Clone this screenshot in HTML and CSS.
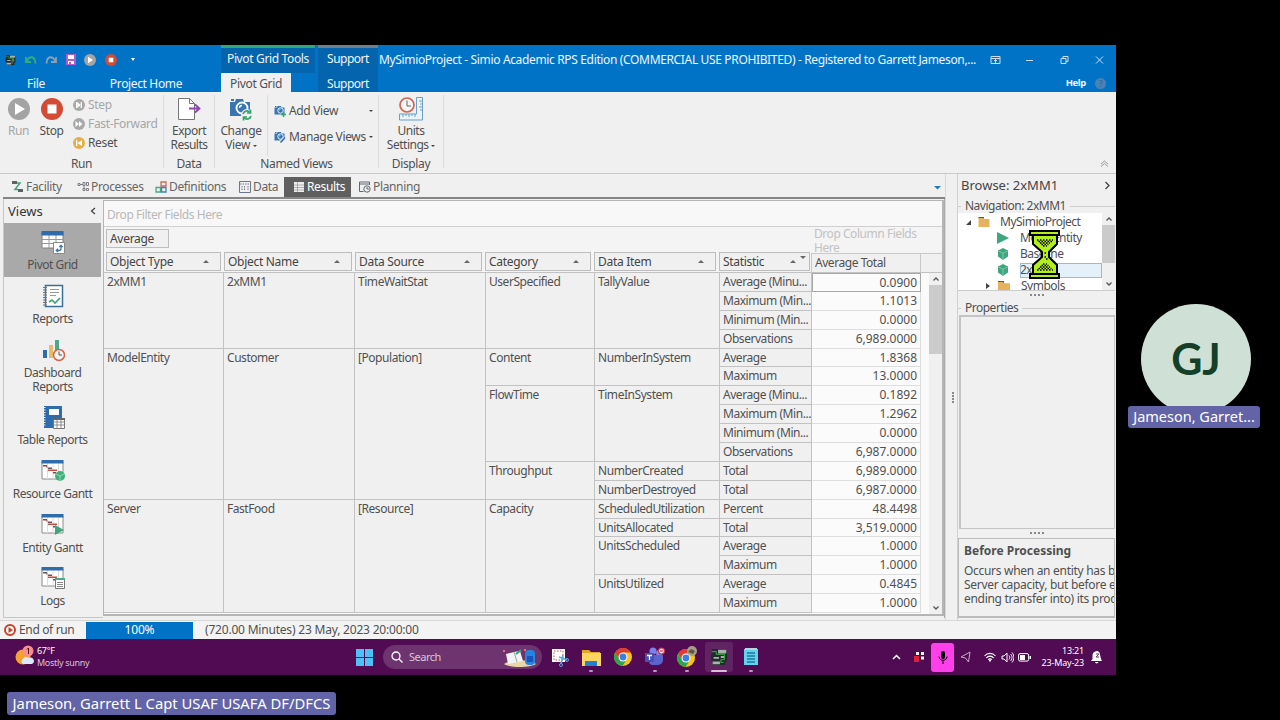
FILE: index.html
```
<!DOCTYPE html>
<html lang="en">
<head>
    <meta charset="UTF-8">
    <meta name="viewport" content="width=device-width, initial-scale=1.0">
    <title>MySimioProject - Simio</title>
    <link rel="stylesheet" href="styles.css">
</head>
<body>
    <!-- shared icon shapes -->
    <svg class="defs" width="0" height="0">
        <symbol id="gantt" viewBox="0 0 24 24">
            <path fill="#fff" stroke="#8a8a8a" d="M1 3h21v17H1z"/>
            <path stroke="#ddd" d="M6.500 4v16M12 4v16M17.500 4v16"/>
            <path fill="#2f6cab" d="M.5 1h22v3.500H.5z"/>
            <path fill="#5a5a62" d="M2 6h4v1.500H2zM7 8.500h4V10H7zM12 13h3v1.500h-3z"/>
            <path fill="#cf4c3c" d="M5 7.200h1.500v1.300H5zM7 10.500h9V12H7z"/>
        </symbol>
        <symbol id="camera" viewBox="0 0 24 24">
            <path fill="#3975b3" d="M1 5h5l1-3h7l1 3h6v14H1z"/>
            <path fill="#3975b3" d="M2 2h3v2H2z"/>
            <circle cx="13" cy="11" r="5.500" fill="#3975b3" stroke="#fff" stroke-width="1.800"/>
            <path fill="none" stroke="#fff" stroke-width="1.300" d="M10.500 11a2.500 2.500 0 0 1 2.500-2.500"/>
        </symbol>
        <symbol id="cube" viewBox="0 0 12 12">
            <path fill="#3fa67f" d="M6 0l5 2.600v6L6 12 1 8.600v-6z"/>
            <path fill="none" stroke="#8fd0b7" stroke-width=".8" d="M1.500 3L6 5.400 10.500 3M6 5.400v6"/>
        </symbol>
        <symbol id="folder" viewBox="0 0 12 11">
            <path fill="#555" d="M0 0h6v2H0z"/>
            <path fill="#e6b25c" d="M0 1h5l1 1.200h6V11H0z"/>
        </symbol>
        <symbol id="chrome" viewBox="0 0 20 20">
            <circle cx="10" cy="10" r="9" fill="#fbc116"/>
            <path fill="#e33b2e" d="M2.200 5.500A9 9 0 0 1 17.800 5.500H10L6 12.300z"/>
            <path fill="#31a350" d="M2.200 5.500A9 9 0 0 0 9.500 19l4.300-6.800L10 14l-4-2z"/>
            <circle cx="10" cy="10" r="4.500" fill="#fff"/>
            <circle cx="10" cy="10" r="3.400" fill="#3d7de6"/>
        </symbol>
        <symbol id="simio" viewBox="0 0 20 20">
            <path fill="#242b2c" d="M2 1h16v4h1v10h-2v4H3v-5H1V7h1z"/>
            <path fill="#aab2ae" d="M9 2h9v4H9zM4 10h6v2H4zM3 15h8v3H3zM12 9h4v2h-4z"/>
            <path fill="none" stroke="#35b04a" stroke-width="1.100" d="M2 4h5v3h9v6h-4v3h3"/>
        </symbol>
    </svg>

    <div class="app">
        <header class="titlebar">
            <div class="title-left">
                <div class="quick">
                    <svg width="11" height="12" viewBox="0 0 20 20"><use href="#simio"/></svg>
                    <svg width="12" height="10" viewBox="0 0 12 10"><path d="M1 2v5h5M1.500 6.500C4 1 10 0 10.500 8.500" fill="none" stroke="#35ae72" stroke-width="1.800"/></svg>
                    <svg width="12" height="10" viewBox="0 0 12 10"><path d="M11 2v5H6M10.500 6.500C8 1 2 0 1.500 8.500" fill="none" stroke="#8c9fb3" stroke-width="1.800"/></svg>
                    <svg width="10" height="11" viewBox="0 0 10 11"><path fill="#b25bd0" d="M0 0h10v11H0z"/><path fill="#fff" d="M2 1h6v4H2zM2 7h6v3H2z"/><path fill="#b25bd0" d="M3 8h2v2H3z"/></svg>
                    <svg width="12" height="12" viewBox="0 0 12 12"><circle cx="6" cy="6" r="6" fill="#a5a5a5"/><path fill="#fff" d="M4 2.800v6.400L9 6z"/></svg>
                    <svg width="12" height="12" viewBox="0 0 12 12"><circle cx="6" cy="6" r="6" fill="#d24b34"/><path fill="#fff" d="M3.700 3.700h4.600v4.600H3.700z"/></svg>
                    <svg width="6" height="5" viewBox="0 0 6 5"><path fill="#fff" d="M1 1h4L3 4z"/></svg>
                </div>
                <div class="menu"><span class="file">File</span><span class="home">Project Home</span></div>
            </div>
            <div class="ctx ctx-pivot">
                <div class="ctx-title">Pivot Grid Tools</div>
                <div class="ctx-tab active">Pivot Grid</div>
            </div>
            <div class="ctx ctx-support">
                <div class="ctx-title">Support</div>
                <div class="ctx-tab">Support</div>
            </div>
            <div class="title-right">
                <div class="caption-row">
                    <span class="caption">MySimioProject - Simio Academic RPS Edition (COMMERCIAL USE PROHIBITED) - Registered to Garrett Jameson,...</span>
                    <svg class="window-buttons" width="112" height="12" viewBox="0 0 112 12" fill="none" stroke="#c9dff1">
                        <path d="M1 2.500h9v7H1zM1 4.500h9M5.500 9V5.500M4 7l1.500-1.500L7 7"/>
                        <path d="M36 6.500h7"/>
                        <path d="M71 4.500h5v5h-5zM73 4.500v-2h5v5h-2"/>
                        <path d="M106 2.500l7 7M113 2.500l-7 7"/>
                    </svg>
                </div>
                <div class="help-row"><b>Help</b><span class="help-mark">?</span></div>
            </div>
        </header>

        <section class="ribbon">
            <div class="group group-run">
                <div class="group-body">
                    <div class="big off">
                        <svg width="24" height="24" viewBox="0 0 24 24"><circle cx="12" cy="12" r="11" fill="#a3a3a3"/><path fill="#fff" d="M8 6v12l10-6z"/></svg>
                        <span>Run</span>
                    </div>
                    <div class="big">
                        <svg width="24" height="24" viewBox="0 0 24 24"><circle cx="12" cy="12" r="11" fill="#d24b34"/><path fill="#fff" d="M7.500 7.500h9v9h-9z"/></svg>
                        <span>Stop</span>
                    </div>
                    <div class="small-list">
                        <div class="small off"><svg width="12" height="12" viewBox="0 0 12 12"><circle cx="6" cy="6" r="6" fill="#a8a8a8"/><path fill="#fff" d="M3 3h1.300v6H3zM4.500 3l3 3-3 3zM7.600 3H9v6H7.600z"/></svg>Step</div>
                        <div class="small off"><svg width="12" height="12" viewBox="0 0 12 12"><circle cx="6" cy="6" r="6" fill="#a8a8a8"/><path fill="#fff" d="M2.500 3l3.500 3-3.500 3zM6 3l3.500 3L6 9z"/></svg>Fast-Forward</div>
                        <div class="small"><svg width="12" height="12" viewBox="0 0 12 12"><circle cx="6" cy="6" r="6" fill="#e8ad45"/><path fill="#fff" d="M3 3h1.300v6H3zM9 3v6L4.500 6z"/></svg>Reset</div>
                    </div>
                </div>
                <div class="group-name">Run</div>
            </div>
            <div class="group group-data">
                <div class="group-body">
                    <div class="big">
                        <svg width="24" height="24" viewBox="0 0 24 24"><path fill="#fff" stroke="#777" d="M1.500 1.500h11l5 5v16h-16z"/><path fill="none" stroke="#777" d="M12.500 1.500v5h5"/><path fill="none" stroke="#8d46ae" stroke-width="1.800" d="M12 11.500h10M18 7.500l4.500 4-4.500 4"/></svg>
                        <span>Export<br>Results</span>
                    </div>
                </div>
                <div class="group-name">Data</div>
            </div>
            <div class="group group-views">
                <div class="group-body">
                    <div class="big">
                        <svg width="24" height="24" viewBox="0 0 24 24"><use href="#camera"/><circle cx="18" cy="18" r="6" fill="#f0f0f0"/><path fill="none" stroke="#35a56d" stroke-width="1.700" d="M14 17a4 4 0 0 1 7-1.500M22 19a4 4 0 0 1-7 1.500M21.500 12.500v3.500H18M14.500 23.500V20H18"/></svg>
                        <span>Change<br>View <i class="drop"></i></span>
                    </div>
                    <div class="view-list">
                        <div class="small"><svg width="12" height="12" viewBox="0 0 24 24"><use href="#camera"/><path stroke="#35a56d" stroke-width="3" d="M19 14v10M14 19h10"/></svg>Add View<i class="drop far"></i></div>
                        <div class="small"><svg width="12" height="12" viewBox="0 0 24 24"><use href="#camera"/><path stroke="#f0f0f0" stroke-width="6" d="M12 23l9-9"/><path stroke="#34689d" stroke-width="3" d="M13 23l9-10"/></svg>Manage Views<i class="drop far"></i></div>
                    </div>
                </div>
                <div class="group-name">Named Views</div>
            </div>
            <div class="group group-display">
                <div class="group-body">
                    <div class="big">
                        <svg width="26" height="24" viewBox="0 0 26 24"><path fill="#e9f4fa" stroke="#6b9fc6" d="M18.500.5h6v22.500h-23v-6h17z"/><path stroke="#6b9fc6" d="M24 4h-3M24 7h-2M24 10h-3M24 13h-2M5 17v3M8 17v2M11 17v3M14 17v2M17 17v3"/><circle cx="9" cy="8" r="7" fill="#f6f6f6" stroke="#cf6752" stroke-width="1.700"/><path fill="none" stroke="#666" d="M9 3.500V9h4"/></svg>
                        <span>Units<br>Settings <i class="drop"></i></span>
                    </div>
                </div>
                <div class="group-name">Display</div>
            </div>
            <svg class="collapse" width="9" height="7" viewBox="0 0 9 7" fill="none" stroke="#999"><path d="M1 4l3.500-3L8 4M1 6.500l3.500-3 3.500 3"/></svg>
        </section>

        <div class="workspace">
            <main class="main">
                <nav class="tabs">
                    <span class="tab facility"><svg width="13" height="12" viewBox="0 0 13 12"><path fill="#5a6461" d="M1 0h5v3H1zM7 8h5v3H7z"/><path fill="none" stroke="#48a283" stroke-width="1.500" d="M6 2h3L4 8.500h3"/></svg>Facility</span>
                    <span class="tab processes"><svg width="12" height="12" viewBox="0 0 12 12" fill="none" stroke="#7d7d85"><path d="M1 2.500h2v2H1zM3 3.500h3M6 1.500h2v3H6zM9.500 1.500h2v3h-2zM7 5v3M6 7.500h2v2H6zM9.500 7.500h2v2h-2z"/></svg>Processes</span>
                    <span class="tab definitions"><svg width="12" height="12" viewBox="0 0 12 12" fill="none" stroke-width="1.300"><path stroke="#d06855" d="M6 1h5v4H6z"/><path stroke="#4ba78d" d="M1 6.500h4.500v4.500H1z"/><path stroke="#4380b5" d="M6.500 6.500H11V11H6.500z"/></svg>Definitions</span>
                    <span class="tab data"><svg width="12" height="12" viewBox="0 0 12 12" fill="none" stroke="#6c7883"><path d="M.5.5h11v11H.5z"/><path stroke-dasharray="1.500 1" d="M1 3h10M3 5v5M5.500 5v5M9 5v5"/></svg>Data</span>
                    <span class="tab results"><svg width="10" height="10" viewBox="0 0 10 10"><path fill="#eee" d="M0 0h10v10H0z"/><path stroke="#888" stroke-width=".6" d="M3.500 0v10M0 3h10M0 5.500h10M0 8h10"/></svg>Results</span>
                    <span class="tab planning"><svg width="12" height="12" viewBox="0 0 12 12" fill="none" stroke="#5d6972"><path d="M.5 1h10v3M.5 1v9.500h4M.5 3h10"/><circle cx="8" cy="8" r="3.200"/><path d="M8 6v2h2"/></svg>Planning</span>
                    <svg class="tab-menu" width="7" height="5" viewBox="0 0 7 5"><path fill="#2a78b8" d="M0 1h7L3.500 4.500z"/></svg>
                </nav>
                <div class="results-page">
                    <aside class="views">
                        <div class="views-head">Views<svg width="6" height="8" viewBox="0 0 6 8"><path fill="none" stroke="#444" stroke-width="1.300" d="M5 1L1.500 4 5 7"/></svg></div>
                        <div class="view selected">
                            <svg width="24" height="24" viewBox="0 0 24 24"><path fill="#fff" stroke="#808080" d="M1 2h21v16H1z"/><path stroke="#999" d="M1 9.500h21M1 13.500h21M8 5v13M15 5v13"/><path fill="#2f6cab" d="M.5 1h22v4.500H.5z"/><path fill="#fff" stroke="#888" d="M12.500 12.500h11v11h-11z"/><path fill="none" stroke="#3975b3" stroke-width="1.300" d="M15.500 20.500h2.500c1.500 0 2-1 2-2v-3M17 18.800l-1.700 1.700L17 22M18.300 17L20 15.300l1.700 1.700"/></svg>
                            <span>Pivot Grid</span>
                        </div>
                        <div class="view">
                            <svg width="24" height="24" viewBox="0 0 24 24"><path fill="#fff" stroke="#3c6f98" stroke-width="1.500" d="M4.500 1.500h17v21h-17z"/><path stroke="#777" stroke-width="4" stroke-dasharray="1 1.500" d="M4 3v19"/><path stroke="#999" d="M9 5.500h9M9 8.500h9M9 11.500h6"/><path fill="none" stroke="#3ca574" stroke-width="1.700" d="M8 18l3-2 3 3 5-5"/></svg>
                            <span>Reports</span>
                        </div>
                        <div class="view tall">
                            <svg width="24" height="24" viewBox="0 0 24 24"><path fill="#2f6cab" d="M2 12h4v8H2z"/><path fill="#e9bb69" d="M8 7h4v13H8z"/><path fill="#4ba78d" d="M14 2h4v16h-4z"/><circle cx="18" cy="17" r="5.500" fill="#f3f3f3" stroke="#d36347" stroke-width="1.500"/><path fill="none" stroke="#555" d="M18 13.500V17h3"/></svg>
                            <span>Dashboard<br>Reports</span>
                        </div>
                        <div class="view">
                            <svg width="24" height="24" viewBox="0 0 24 24"><path fill="#2f6cab" d="M3 1h18v22H3z"/><path stroke="#f0f0f0" stroke-width="3" stroke-dasharray="1 1.500" d="M3 2v20"/><path fill="#fff" d="M8 4h10v6H8z"/><path fill="#fff" stroke="#777" d="M12.500 13.500h11v10h-11z"/><path stroke="#777" stroke-width=".8" d="M12 17h12M12 20h12M16 14v9M20 14v9"/><path fill="#666" d="M12 13h12v2H12z"/></svg>
                            <span>Table Reports</span>
                        </div>
                        <div class="view">
                            <svg width="24" height="24" viewBox="0 0 24 24"><use href="#gantt"/><circle cx="19" cy="17" r="5" fill="#41b07a"/><path fill="none" stroke="#a9dfc5" stroke-width=".8" d="M15 15l4 2 4-2M19 17v5"/></svg>
                            <span>Resource Gantt</span>
                        </div>
                        <div class="view">
                            <svg width="24" height="24" viewBox="0 0 24 24"><use href="#gantt"/><path fill="#3fa67f" d="M14 12v10l9-5z"/></svg>
                            <span>Entity Gantt</span>
                        </div>
                        <div class="view">
                            <svg width="24" height="24" viewBox="0 0 24 24"><use href="#gantt"/><path fill="#fff" stroke="#777" d="M14.500 12.500h9v10h-9z"/><path fill="#4ba78d" d="M14 12h10v2H14z"/><path stroke="#888" d="M16 16.500h6M16 18.500h6M16 20.500h6"/></svg>
                            <span>Logs</span>
                        </div>
                    </aside>

                    <div class="pivot">
                        <div class="filter-drop">Drop Filter Fields Here</div>
                        <div class="pivot-top">
                            <div class="row-fields">
                                <div class="field average">Average</div>
                                <div class="fields">
                                    <div class="field">Object Type<i class="up"></i></div>
                                    <div class="field">Object Name<i class="up"></i></div>
                                    <div class="field">Data Source<i class="up"></i></div>
                                    <div class="field">Category<i class="up"></i></div>
                                    <div class="field">Data Item<i class="up"></i></div>
                                    <div class="field statistic">Statistic<i class="up"></i><i class="funnel"></i></div>
                                </div>
                            </div>
                            <div class="column-fields">
                                <div class="column-drop">Drop Column Fields Here</div>
                                <div class="total-head"><span>Average Total</span></div>
                            </div>
                        </div>
                        <div class="pivot-body">
                            <div class="cells">
                                <div class="r4">2xMM1</div><div class="r4">2xMM1</div><div class="r4">TimeWaitStat</div><div class="r4">UserSpecified</div><div class="r4">TallyValue</div>
                                <div>Average (Minu...</div><div class="num focus">0.0900</div>
                                <div>Maximum (Min...</div><div class="num">1.1013</div>
                                <div>Minimum (Min...</div><div class="num">0.0000</div>
                                <div>Observations</div><div class="num">6,989.0000</div>

                                <div class="r8">ModelEntity</div><div class="r8">Customer</div><div class="r8">[Population]</div><div class="r2">Content</div><div class="r2">NumberInSystem</div>
                                <div>Average</div><div class="num">1.8368</div>
                                <div>Maximum</div><div class="num">13.0000</div>
                                <div class="r4">FlowTime</div><div class="r4">TimeInSystem</div>
                                <div>Average (Minu...</div><div class="num">0.1892</div>
                                <div>Maximum (Min...</div><div class="num">1.2962</div>
                                <div>Minimum (Min...</div><div class="num">0.0000</div>
                                <div>Observations</div><div class="num">6,987.0000</div>
                                <div class="r2">Throughput</div><div>NumberCreated</div><div>Total</div><div class="num">6,989.0000</div>
                                <div>NumberDestroyed</div><div>Total</div><div class="num">6,987.0000</div>

                                <div class="r6">Server</div><div class="r6">FastFood</div><div class="r6">[Resource]</div><div class="r6">Capacity</div>
                                <div>ScheduledUtilization</div><div>Percent</div><div class="num">48.4498</div>
                                <div>UnitsAllocated</div><div>Total</div><div class="num">3,519.0000</div>
                                <div class="r2">UnitsScheduled</div><div>Average</div><div class="num">1.0000</div>
                                <div>Maximum</div><div class="num">1.0000</div>
                                <div class="r2">UnitsUtilized</div><div>Average</div><div class="num">0.4845</div>
                                <div>Maximum</div><div class="num">1.0000</div>
                            </div>
                            <div class="scroll">
                                <svg width="8" height="6" viewBox="0 0 8 6"><path fill="none" stroke="#555" stroke-width="1.300" d="M1.500 4.500L4 2l2.500 2.500"/></svg>
                                <div class="thumb"></div>
                                <svg width="8" height="6" viewBox="0 0 8 6"><path fill="none" stroke="#555" stroke-width="1.300" d="M1.500 1.500L4 4l2.500-2.500"/></svg>
                            </div>
                        </div>
                    </div>
                </div>
            </main>

            <div class="splitter"><i></i><i></i><i></i><i></i></div>

            <aside class="browse">
                <div class="browse-head">Browse: 2xMM1<svg width="7" height="9" viewBox="0 0 7 9"><path fill="none" stroke="#444" stroke-width="1.300" d="M1.500 1L5 4.500 1.500 8"/></svg></div>
                <div class="legend">Navigation: 2xMM1</div>
                <div class="nav-box">
                    <div class="tree">
                        <div class="node root"><svg class="arrow" width="5" height="5" viewBox="0 0 5 5"><path fill="#444" d="M5 0v5H0z"/></svg><svg width="12" height="10"><use href="#folder"/></svg><span>MySimioProject</span></div>
                        <div class="node"><svg width="12" height="12" viewBox="0 0 12 12"><path fill="#3fa67f" d="M0 0v12l12-6z"/></svg><span>ModelEntity</span></div>
                        <div class="node"><svg width="12" height="12"><use href="#cube"/></svg><span>Baseline</span></div>
                        <div class="node current"><svg width="12" height="12"><use href="#cube"/></svg><span>2xMM1</span></div>
                        <div class="node closed"><svg class="arrow" width="4" height="6" viewBox="0 0 4 6"><path fill="#444" d="M0 0l4 3-4 3z"/></svg><svg width="12" height="11"><use href="#folder"/></svg><span>Symbols</span></div>
                    </div>
                    <div class="scroll nav-scroll">
                        <svg width="8" height="6" viewBox="0 0 8 6"><path fill="none" stroke="#555" stroke-width="1.300" d="M1.500 4.500L4 2l2.500 2.500"/></svg>
                        <div class="thumb"></div>
                        <svg width="8" height="6" viewBox="0 0 8 6"><path fill="none" stroke="#555" stroke-width="1.300" d="M1.500 1.500L4 4l2.500-2.500"/></svg>
                    </div>
                </div>
                <div class="grip"></div>
                <div class="legend props">Properties</div>
                <div class="props-box"></div>
                <div class="grip"></div>
                <div class="hint">
                    <b>Before Processing</b>
                    <p>Occurs when an entity has been<br>Server capacity, but before ent<br>ending transfer into) its proces</p>
                </div>
            </aside>
        </div>

        <footer class="status">
            <div class="state"><svg width="12" height="12" viewBox="0 0 12 12"><circle cx="6" cy="6" r="5" fill="#fff" stroke="#c8402b" stroke-width="2"/><path fill="#c8402b" d="M4.500 3v6L9 6z"/></svg>End of run</div>
            <div class="progress">100%</div>
            <div class="clock">(720.00 Minutes) 23 May, 2023 20:00:00</div>
        </footer>

        <div class="taskbar">
            <div class="weather">
                <svg width="19" height="20" viewBox="0 0 19 20"><circle cx="8" cy="12" r="7.500" fill="#f3a32f"/><path fill="#dce9fa" d="M8 19a3 3 0 0 1 0-5 4 4 0 0 1 6-1 3 3 0 0 1 3 6z"/><circle cx="13" cy="6" r="5.500" fill="#f58e8c"/><path stroke="#4c1320" d="M13.500 3v6M12 4.500L13.500 3"/></svg>
                <div>67°F<br><span>Mostly sunny</span></div>
            </div>
            <svg class="win" width="17" height="17" viewBox="0 0 17 17"><path fill="#4fc0f5" d="M0 0h8v8H0zM9 0h8v8H9zM0 9h8v8H0zM9 9h8v8H9z"/></svg>
            <div class="search">
                <svg width="12" height="12" viewBox="0 0 12 12"><circle cx="5" cy="5" r="4" fill="none" stroke="#fff" stroke-width="1.300"/><path stroke="#fff" stroke-width="1.300" d="M8 8l3.500 3.500"/></svg>
                <span>Search</span>
                <svg width="36" height="19" viewBox="0 0 36 19"><path fill="#ead5a6" d="M2 16c8-5 24-5 32 0-6 4-26 4-32 0z"/><path fill="#f2f3f5" d="M4 6l8-2 6-1 3 10-10 2-5 1z"/><path stroke="#91a79f" d="M12 4l3 10"/><path stroke="#38a078" stroke-width="2" d="M14 6l5-4"/><rect x="23" y="2" width="10" height="15" rx="4" fill="#2584e0"/><path fill="#1a53b6" d="M25 8h6v6h-6z"/><path fill="#f06c8a" d="M1 2h2v2H1zM22 1h2v2h-2z"/></svg>
            </div>
            <div class="task"><svg width="19" height="19" viewBox="0 0 19 19"><path fill="#fff" d="M2 1h13v13H2z"/><path fill="none" stroke="#d45341" stroke-dasharray="1.500 1.500" d="M4 3h9v9H4z"/><path fill="none" stroke="#58a9dc" stroke-width="1.700" d="M11 16l2-9M9 9l8 3"/><circle cx="11" cy="17" r="1.500" fill="none" stroke="#58a9dc"/><circle cx="17" cy="12" r="1.500" fill="none" stroke="#58a9dc"/></svg></div>
            <div class="task open"><svg width="19" height="19" viewBox="0 0 19 19"><path fill="#e1a52a" d="M0 2h7l2 2h9v4H0z"/><path fill="#fcd462" d="M0 5h19v13H0z"/><path fill="#2481cf" d="M3 13h12v5H3z"/></svg></div>
            <div class="task"><svg width="20" height="20"><use href="#chrome"/></svg></div>
            <div class="task open"><svg width="20" height="20" viewBox="0 0 20 20"><circle cx="14" cy="6" r="3" fill="#7b83eb"/><circle cx="8" cy="4" r="3.500" fill="#7b83eb"/><path fill="#5b63cc" d="M4 8h14v5a5 5 0 0 1-5 5H8a4 4 0 0 1-4-4z"/><path fill="#4651b8" d="M0 6h9v9H0z"/><path stroke="#fff" stroke-width="1.300" d="M2 8.500h5M4.500 8.500V13"/><circle cx="16.500" cy="4" r="3" fill="#eee" stroke="#d22f4a" stroke-width="1.200"/><path stroke="#d22f4a" stroke-width="1.200" d="M15 4h3"/></svg></div>
            <div class="task open"><svg width="22" height="22" viewBox="0 0 22 22"><use href="#chrome" y="2" width="20" height="20"/><circle cx="16" cy="5" r="5" fill="#a69d87"/><path fill="#55593e" d="M12 6l3-3 4 2-2 3z"/></svg></div>
            <div class="task open current-task"><svg width="18" height="18"><use href="#simio"/></svg></div>
            <div class="task open"><svg width="16" height="18" viewBox="0 0 16 18"><path fill="#66d1ec" d="M1 1h14v16H1z"/><path stroke="#1a7b9c" stroke-width="1.300" d="M4 5h8M4 8h8M4 11h8M4 14h8"/><path fill="#b9d4db" d="M2 0h12v2H2z"/></svg></div>
            <div class="tray">
                <svg width="9" height="6" viewBox="0 0 9 6"><path fill="none" stroke="#fff" stroke-width="1.500" d="M1 5l3.500-3.500L8 5"/></svg>
                <svg class="dots" width="12" height="12" viewBox="0 0 12 12"><path fill="#fff" d="M3 1h3v3H3zM8 1h3v3H8zM8 5.500h3v3H8z"/><path fill="#df2034" d="M1 5h5v6H1z"/></svg>
                <div class="mic"><svg width="10" height="13" viewBox="0 0 10 13"><rect x="3" y="0" width="4" height="8" rx="2"/><path fill="none" stroke="#000" d="M1 5.500c0 5 8 5 8 0M5 9.500V13"/></svg></div>
                <svg class="loc" width="11" height="12" viewBox="0 0 11 12"><path fill="none" stroke="#c8acc9" d="M10 1L8.500 11 5.500 7 1 6z"/></svg>
                <svg class="wifi" width="12" height="10" viewBox="0 0 12 10" fill="none" stroke="#fff" stroke-width="1.100"><path d="M.5 4c3-3.500 8-3.500 11 0M2.300 6c2-2.500 5.400-2.500 7.400 0M4.200 7.700c1-1.200 2.600-1.200 3.600 0"/><circle cx="6" cy="8.500" r=".6"/></svg>
                <svg width="13" height="11" viewBox="0 0 13 11" fill="none" stroke="#fff"><path d="M1 4h2l3-3v9L3 7H1zM8 3.500c1 1 1 3 0 4M9.500 2c2 2 2 5 0 7M11 .5c2.500 3 2.500 7 0 10"/></svg>
                <svg class="battery" width="13" height="9" viewBox="0 0 13 9"><rect x=".6" y=".6" width="10" height="7.500" rx="1.500" fill="none" stroke="#fff"/><path fill="#fff" d="M2 2h5v5H2zM11.500 3H13v3h-1.500z"/></svg>
                <div class="date">13:21<br>23-May-23</div>
                <svg width="11" height="13" viewBox="0 0 11 13"><path fill="#fff" d="M0 10l1.500-2V4a4 4 0 0 1 7-2.500L10 8l1 2zM4 11h3.500a1.800 1.800 0 0 1-3.500 0z"/><path fill="none" stroke="#6c3c75" d="M5 3h3L5 6h3"/></svg>
            </div>
        </div>

        <!-- busy pointer -->
        <svg class="hourglass" width="34" height="52" viewBox="0 0 34 52">
            <path fill="#b3ee1d" stroke="#000" stroke-width="2" d="M5 6v9l9 8v5l-9 8v9h24v-9l-8-8v-5l8-8V6z"/>
            <path fill="#b3ee1d" stroke="#000" stroke-width="2" d="M2 2h29v4H2zM2 45h29v4H2z"/>
            <path stroke="#000" stroke-width="1.500" stroke-dasharray="1.500 1.500" d="M9 11h16M10.500 12.500h14M12 14h10M13.500 15.500h7M15 17h4M16.500 24h1.500M16.500 28h1.500M18 30h1.500M15 35h4M13.500 36.500h7M12 38h10M10.500 39.500h13M9 41h16"/>
        </svg>
    </div>

    <div class="avatar">GJ</div>
    <div class="tag person">Jameson, Garret...</div>
    <div class="tag presenter">Jameson, Garrett L Capt USAF USAFA DF/DFCS</div>
</body>
</html>
```
FILE: styles.css
```
:root {
    --blue: #0173c7;
    --panel: #f0f0f0;
    --line: #c2c2c2;
    --text: #505050;
    --purple: #500b52;
}
* {
    box-sizing: border-box;
}
body {
    margin: 0;
    width: 1280px;
    height: 720px;
    overflow: hidden;
    position: relative;
    background: #000;
    font-family: 'Noto Sans', 'Open Sans', sans-serif;
    font-size: 12px;
    line-height: 14px;
    color: var(--text);
}
svg {
    display: block;
    flex: none;
}
.defs {
    position: absolute;
}
.app {
    position: relative;
    width: 1116px;
    height: 630px;
    margin-top: 45px;
    background: var(--panel);
    display: flex;
    flex-direction: column;
    overflow: hidden;
    white-space: nowrap;
    letter-spacing: -0.35px;
}

/* title bar */
.titlebar {
    display: flex;
    height: 47px;
    background: var(--blue);
    color: #eef6fc;
}
.title-left {
    width: 221px;
}
.quick {
    display: flex;
    align-items: center;
    height: 29px;
    padding-left: 5px;
    gap: 8.500px;
}
.quick svg:last-child {
    margin-left: 5px;
}
.menu {
    display: flex;
    line-height: 19px;
}
.file {
    width: 72px;
    text-align: center;
}
.home {
    width: 148px;
    text-align: center;
}
.ctx {
    text-align: center;
}
.ctx-title {
    height: 28px;
    line-height: 22px;
    background: #0564ae;
    border-top: 3px solid #2eaa78;
}
.ctx-pivot {
    width: 94px;
    margin-right: 3px;
}
.ctx-tab {
    height: 19px;
    line-height: 22px;
}
.ctx-tab.active {
    width: 70px;
    background: var(--panel);
    color: var(--text);
}
.ctx-support {
    width: 60px;
    background: #0564ae;
    letter-spacing: -0.5px;
}
.ctx-support .ctx-title {
    border-color: #6f7f8c;
}
.title-right {
    flex: 1;
    padding-left: 1px;
}
.caption-row {
    display: flex;
    align-items: center;
    height: 29px;
}
.caption {
    width: 611px;
}
.window-buttons {
    overflow: visible;
}
.help-row {
    display: flex;
    justify-content: flex-end;
    align-items: center;
    gap: 9px;
    height: 18px;
    padding-right: 10px;
    font-size: 9.500px;
}
.help-mark {
    width: 11px;
    height: 11px;
    line-height: 11px;
    border-radius: 50%;
    text-align: center;
    background: #4c82b0;
    color: #1e64a4;
    font-size: 9px;
}

/* ribbon */
.ribbon {
    display: flex;
    height: 82px;
    padding-top: 3px;
    border-bottom: 1px solid #c9c9c9;
}
.group {
    display: flex;
    flex-direction: column;
    height: 73px;
    border-right: 1px solid #dcdcdc;
}
.group-body {
    display: flex;
    flex: none;
    height: 61px;
}
.group-name {
    flex: none;
    text-align: center;
    line-height: 16px;
}
.group-run { width: 164px; }
.group-data { width: 51px; }
.group-views { width: 164px; }
.group-display { width: 65px; }
.big {
    display: flex;
    flex: none;
    flex-direction: column;
    align-items: center;
    text-align: center;
    padding-top: 2px;
    gap: 3px;
}
.off {
    color: #a6a6a6;
}
.group-run .big {
    width: 33px;
}
.group-run .big:first-child {
    margin-left: 2px;
}
.group-data .big {
    width: 50px;
    letter-spacing: -0.5px;
}
.group-views .big {
    width: 53px;
    border-right: 1px solid #dcdcdc;
}
.group-display .big {
    width: 64px;
    letter-spacing: -0.5px;
}
.small-list {
    padding: 0 0 0 5px;
}
.small {
    display: flex;
    align-items: center;
    height: 19px;
    gap: 3px;
}
.view-list {
    flex: 1;
    padding: 3px 7px 0 6px;
}
.view-list .small {
    height: 26px;
}
.drop {
    display: inline-block;
    border: 2px solid transparent;
    border-top-color: #444;
    border-bottom: 0;
    vertical-align: middle;
}
.far {
    margin-left: auto;
}
.collapse {
    margin: 65px 7px 0 auto;
}

/* workspace */
.workspace {
    display: flex;
    height: 446px;
}
.main {
    width: 945px;
    padding-left: 3px;
}
.tabs {
    display: flex;
    align-items: center;
    height: 25px;
    padding-top: 3px;
    border-bottom: 2px solid #858585;
    color: #666;
}
.tab {
    display: flex;
    align-items: center;
    gap: 2px;
    height: 20px;
    padding-left: 8px;
}
.facility { width: 66px; }
.processes { width: 78px; }
.definitions { width: 84px; }
.data { width: 53px; }
.results {
    width: 67px;
    padding-left: 10px;
    gap: 3px;
    background: #5f5f5f;
    color: #fff;
}
.planning { padding-left: 8px; }
.tab-menu {
    margin: 0 4px 0 auto;
}
.results-page {
    display: flex;
    height: 419px;
    border-right: 1px solid #aaa;
}
.views {
    width: 100px;
    border-left: 1px solid #c6c6c6;
    border-bottom: 1px solid #c6c6c6;
}
.views-head {
    display: flex;
    align-items: center;
    justify-content: space-between;
    height: 24px;
    padding: 0 7px 0 4px;
    font-size: 13px;
    letter-spacing: 0;
    color: #333;
}
.view {
    display: flex;
    flex-direction: column;
    align-items: center;
    width: 97px;
    height: 53.8px;
    padding-top: 7px;
    gap: 4px;
    text-align: center;
    letter-spacing: -0.5px;
}
.view.tall {
    height: 67.5px;
}
.view.selected {
    background: #a9a9a9;
}

/* pivot grid */
.pivot {
    flex: 1;
    display: flex;
    flex-direction: column;
    height: 416px;
    margin-top: 1px;
    border: 1px solid #b5b5b5;
    border-right-width: 2px;
    border-bottom-width: 2px;
    overflow: hidden;
    letter-spacing: -0.45px;
}
.filter-drop {
    height: 26px;
    line-height: 27px;
    padding-left: 3px;
    background: #f8f8f8;
    border-bottom: 1px solid #d0d0d0;
    color: #b9b9b9;
}
.pivot-top {
    display: flex;
    height: 46px;
    border-bottom: 1px solid var(--line);
    background: #f4f4f4;
}
.row-fields {
    width: 707px;
    padding: 2px 0 0 2px;
}
.field {
    position: relative;
    display: flex;
    align-items: center;
    justify-content: space-between;
    height: 19px;
    padding: 0 11px 0 3px;
    border: 1px solid #bdbdbd;
    background: var(--panel);
    color: #444;
    letter-spacing: -0.3px;
}
.average {
    width: 63px;
    margin-bottom: 4px;
}
.fields {
    display: grid;
    grid-template-columns: 115px 128px 127px 106px 122px 91px;
    column-gap: 3px;
}
.statistic {
    padding-right: 13px;
}
.up {
    border: 3px solid transparent;
    border-bottom-color: #666;
    border-top: 0;
}
.funnel {
    position: absolute;
    right: 3px;
    top: 3px;
    border: 3px solid transparent;
    border-top-color: #666;
    border-bottom: 0;
}
.column-fields {
    flex: 1;
}
.column-drop {
    width: 118px;
    height: 26px;
    padding-left: 3px;
    line-height: 13.500px;
    white-space: normal;
    color: #c2c2c2;
}
.total-head {
    height: 19px;
    border-top: 1px solid #c9c9c9;
    border-left: 1px solid #c9c9c9;
    background: var(--panel);
}
.total-head span {
    display: block;
    width: 109px;
    height: 18px;
    line-height: 18px;
    padding-left: 3px;
    border-right: 1px solid #c9c9c9;
}
.pivot-body {
    display: flex;
    flex: 1;
    min-height: 0;
    background: #fafafa;
}
.cells {
    display: grid;
    grid-template-columns: 120px 131px 131px 109px 125px 92px 109px;
    grid-template-rows: repeat(18, 18.9px);
    width: 817px;
}
.cells div {
    overflow: hidden;
    padding-left: 3px;
    line-height: 18px;
    background: var(--panel);
    border-right: 1px solid var(--line);
    border-bottom: 1px solid var(--line);
}
.cells .r2 { grid-row: span 2; }
.cells .r4 { grid-row: span 4; }
.cells .r6 { grid-row: span 6; }
.cells .r8 { grid-row: span 8; }
.cells .num {
    padding-right: 3px;
    text-align: right;
    letter-spacing: 0;
    background: #fbfbfb;
    border-color: #dedede;
}
.cells .focus {
    border: 1px solid #a8a8a8;
    line-height: 17px;
}
.scroll {
    display: flex;
    flex-direction: column;
    align-items: center;
    width: 13px;
    margin-left: auto;
    padding: 3px 0;
    background: var(--panel);
}
.thumb {
    width: 100%;
    height: 69px;
    margin: 3px 0 auto;
    background: #cbcbcb;
}
.splitter {
    width: 12px;
    display: flex;
    flex-direction: column;
    align-items: center;
    justify-content: center;
    gap: 1px;
    padding-left: 2px;
    border-left: 1px solid #d8d8d8;
}
.splitter i {
    width: 2px;
    height: 2px;
    background: #888;
}

/* browse panel */
.browse {
    width: 158px;
    overflow: hidden;
    border-left: 1px solid #d0d0d0;
    letter-spacing: -0.5px;
}
.browse-head {
    display: flex;
    align-items: center;
    justify-content: space-between;
    height: 22px;
    padding: 0 4px 0 3px;
    font-size: 13px;
    letter-spacing: 0;
    color: #444;
}
.legend {
    display: flex;
    align-items: center;
    gap: 4px;
    height: 14px;
    margin-top: 3px;
}
.legend::before {
    content: '';
    width: 3px;
    border-top: 1px solid #ccc;
}
.legend::after {
    content: '';
    flex: 1;
    border-top: 1px solid #ccc;
}
.nav-box {
    display: flex;
    height: 78px;
    border-bottom: 1px solid #ccc;
}
.tree {
    width: 145px;
    height: 77px;
    padding-top: 1px;
    background: #fff;
    overflow: hidden;
}
.node {
    display: flex;
    align-items: center;
    gap: 11px;
    height: 16px;
    padding-left: 39px;
}
.node span {
    flex: 1;
    height: 15px;
    line-height: 14px;
}
.node.root {
    padding-left: 8px;
    gap: 10px;
}
.root .arrow, .closed .arrow {
    margin-right: -3px;
}
.node.closed {
    padding-left: 28px;
}
.current span {
    background: #e5f1fa;
    outline: 1px solid #9bbbd4;
    outline-offset: -1px;
}
.nav-scroll .thumb {
    height: 38px;
}
.grip {
    width: 14px;
    margin: 3px auto 0;
    border-top: 2px dotted #888;
}
.legend.props {
    margin-top: 5px;
}
.props-box {
    height: 214px;
    margin-left: 1px;
    border: 2px solid #c4c4c4;
    border-bottom-width: 1px;
    border-right-width: 1px;
}
.hint {
    height: 80px;
    margin-top: 4px;
    padding: 5px 0 0 5px;
    border: 1px solid #bbb;
    border-bottom-width: 2px;
    overflow: hidden;
    letter-spacing: 0;
}
.hint p {
    margin: 6px 0 0;
    letter-spacing: -0.3px;
}

/* status bar */
.status {
    display: flex;
    height: 19px;
    border-top: 1px solid #d6d6d6;
    background: #f3f3f3;
    line-height: 18px;
    letter-spacing: -0.2px;
}
.state {
    display: flex;
    align-items: center;
    gap: 3px;
    width: 86px;
    padding-left: 4px;
    letter-spacing: -0.35px;
}
.progress {
    width: 107px;
    height: 17px;
    margin-top: 1px;
    line-height: 16px;
    text-align: center;
    color: #fff;
    background: var(--blue);
}
.clock {
    padding-left: 12px;
}

/* taskbar */
.taskbar {
    display: flex;
    align-items: center;
    height: 36px;
    background: var(--purple);
    color: #fff;
    font-size: 9px;
    line-height: 12px;
    letter-spacing: -0.2px;
}
.weather {
    display: flex;
    gap: 3px;
    width: 356px;
    padding-left: 15px;
    letter-spacing: -0.3px;
}
.weather span {
    color: #d6c4d6;
}
.search {
    display: flex;
    flex: none;
    align-items: center;
    width: 159px;
    height: 24px;
    margin: 0 1px 0 10px;
    padding: 0 4px 0 8px;
    border-radius: 12px;
    background: #6d346f;
    font-size: 11px;
    letter-spacing: -0.5px;
}
.search span {
    flex: 1;
    padding-left: 6px;
    color: #d7c6d8;
}
.task {
    position: relative;
    display: flex;
    align-items: center;
    justify-content: center;
    width: 32px;
    height: 30px;
}
.task.open::after {
    content: '';
    position: absolute;
    bottom: 0;
    left: 14px;
    width: 4px;
    height: 2px;
    border-radius: 1px;
    background: #b59ab7;
}
.task.current-task {
    width: 28px;
    margin: 0 2px;
    background: #612463;
    border-radius: 3px;
}
.task.current-task::after {
    left: 6px;
    width: 16px;
    background: #d7bfd8;
}
.tray {
    display: flex;
    align-items: center;
    margin-left: auto;
    padding-right: 14px;
}
.dots {
    margin: 0 6px 0 12px;
}
.mic {
    display: flex;
    align-items: center;
    justify-content: center;
    width: 23px;
    height: 29px;
    border-radius: 3px;
    background: #ff3fea;
}
.loc {
    margin: 0 13px 0 6px;
}
.wifi, .tray .battery {
    margin-right: 5px;
}
.tray .battery {
    margin-left: 4px;
}
.date {
    width: 48px;
    text-align: right;
    margin-right: 7px;
}

.hourglass {
    position: absolute;
    left: 1028px;
    top: 184px;
}

/* call overlay */
.avatar {
    position: absolute;
    left: 1141px;
    top: 304px;
    width: 110px;
    height: 110px;
    line-height: 110px;
    border-radius: 50%;
    text-align: center;
    background: #cfe1d6;
    color: #153f28;
    font-family: Lato, sans-serif;
    font-size: 43px;
    font-weight: 700;
}
.tag {
    position: absolute;
    border-radius: 3px;
    background: #6264a7;
    color: #fff;
    font-size: 14.500px;
    line-height: 21px;
    text-align: center;
    white-space: nowrap;
}
.person {
    left: 1128px;
    top: 406px;
    width: 132px;
    height: 22px;
}
.presenter {
    left: 7px;
    top: 692px;
    width: 329px;
    height: 23px;
    font-size: 14.800px;
    line-height: 22px;
}
```
